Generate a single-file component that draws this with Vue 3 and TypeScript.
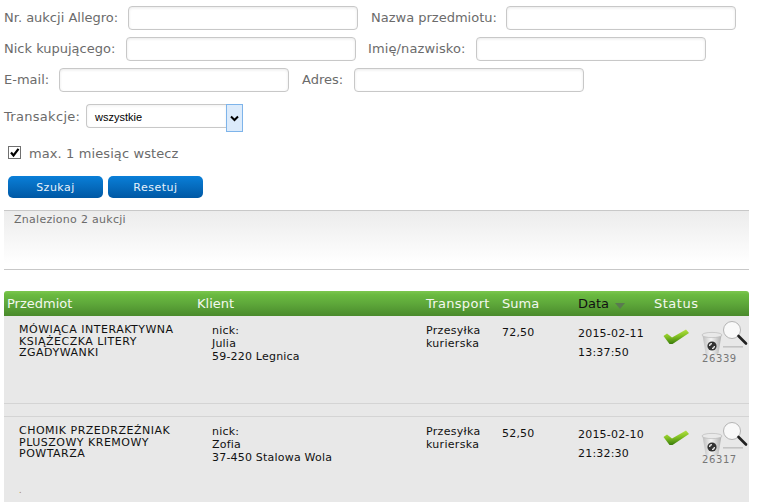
<script setup lang="ts">
interface Row {
  title: string[];
  name: string;
  city: string;
  suma: string;
  date: string;
  time: string;
  id: string;
}
const rows: Row[] = [
  { title: ['MÓWIĄCA INTERAKTYWNA', 'KSIĄŻECZKA LITERY', 'ZGADYWANKI'], name: 'Julia', city: '59-220 Legnica', suma: '72,50', date: '2015-02-11', time: '13:37:50', id: '26339' },
  { title: ['CHOMIK PRZEDRZEŹNIAK', 'PLUSZOWY KREMOWY', 'POWTARZA'], name: 'Zofia', city: '37-450 Stalowa Wola', suma: '52,50', date: '2015-02-10', time: '21:32:30', id: '26317' },
];
</script>

<template>
  <div class="page">
    <form class="form" @submit.prevent>
      <div class="line">
        <label class="lbl w-nr">Nr. aukcji Allegro:</label><input class="inp" />
        <label class="lbl second w-name">Nazwa przedmiotu:</label><input class="inp" />
      </div>
      <div class="line">
        <label class="lbl w-nick">Nick kupującego:</label><input class="inp" />
        <label class="lbl second tight w-full">Imię/nazwisko:</label><input class="inp" />
      </div>
      <div class="line">
        <label class="lbl w-mail">E-mail:</label><input class="inp" />
        <label class="lbl second w-addr">Adres:</label><input class="inp" />
      </div>
      <div class="line sel-line">
        <label class="lbl w-trans">Transakcje:</label>
        <div class="select">
          <span class="sel-text">wszystkie</span>
          <span class="sel-btn">
            <svg width="9" height="7" viewBox="0 0 9 7"><path d="M1 1.5 L4.5 5 L8 1.5" fill="none" stroke="#000" stroke-width="2" /></svg>
          </span>
        </div>
      </div>
      <div class="check-line">
        <span class="box">
          <svg width="13" height="13" viewBox="0 0 13 13"><path d="M3 6.5 L5.5 9.5 L10.5 2.8" fill="none" stroke="#000" stroke-width="2.2" /></svg>
        </span>
        <span class="lbl chk-lbl">max. 1 miesiąc wstecz</span>
      </div>
      <div class="buttons">
        <button class="btn" type="button">Szukaj</button>
        <button class="btn" type="button">Resetuj</button>
      </div>
    </form>

    <div class="found">Znaleziono 2 aukcji</div>

    <div class="table">
      <div class="head grid">
        <span>Przedmiot</span>
        <span>Klient</span>
        <span class="wide">Transport</span>
        <span>Suma</span>
        <span class="active">Data<i class="tri"></i></span>
        <span class="wider">Status</span>
      </div>
      <template v-for="(r, i) in rows" :key="r.id">
        <div class="row grid" :class="{ last: i === 1 }">
          <div class="title"><div v-for="t in r.title" :key="t">{{ t }}</div><div v-if="i === 1" class="dot">.</div></div>
          <div class="client"><div>nick:</div><div>{{ r.name }}</div><div>{{ r.city }}</div></div>
          <div class="transport">Przesyłka<br />kurierska</div>
          <div class="suma">{{ r.suma }}</div>
          <div class="date"><div>{{ r.date }}</div><div>{{ r.time }}</div></div>
          <div class="status">
            <svg class="check" width="27" height="18" viewBox="0 0 27 18">
              <defs>
                <linearGradient :id="'g' + i" x1="0" y1="0" x2="0.15" y2="1">
                  <stop offset="0" stop-color="#c6ea50" />
                  <stop offset=".5" stop-color="#86c424" />
                  <stop offset="1" stop-color="#3d7f0c" />
                </linearGradient>
              </defs>
              <path d="M0.5 8 L4 5.5 L9 9.5 L23 1.5 L26 5 L9.5 16 L6.5 16 Z" :fill="'url(#g' + i + ')'" />
            </svg>
            <div class="tools">
              <svg class="tool-svg" width="50" height="36" viewBox="0 0 50 36">
                <defs>
                  <linearGradient :id="'b' + i" x1="0" y1="0" x2="1" y2="0">
                    <stop offset="0" stop-color="#bdbdbd" />
                    <stop offset=".45" stop-color="#f4f4f4" />
                    <stop offset="1" stop-color="#b0b0b0" />
                  </linearGradient>
                </defs>
                <path d="M2.5 15 L5.5 33 C6 35.5 18 35.5 18.5 33 L21.5 15 Z" :fill="'url(#b' + i + ')'" />
                <ellipse cx="12" cy="15" rx="10" ry="2.6" fill="#e9e9e9" stroke="#bcbcbc" stroke-width=".7" />
                <circle cx="12" cy="26" r="4.6" fill="#333" />
                <path d="M9.6 26 A2.4 2.4 0 0 1 12 23.6 M14.4 26 A2.4 2.4 0 0 1 12 28.4" fill="none" stroke="#eee" stroke-width="1.3" />
                <rect x="23" y="26" width="20" height="1.6" fill="#c4c4c4" />
                <circle cx="32" cy="10" r="8.5" fill="#f9f9f9" stroke="#b4b4b4" stroke-width="1" />
                <path d="M38.5 16 L46 23.5" stroke="#222" stroke-width="2.6" stroke-linecap="round" />
              </svg>
              <div class="id">{{ r.id }}</div>
            </div>
          </div>
        </div>
        <div v-if="i === 0" class="sep"></div>
      </template>
    </div>
  </div>
</template>

<style>
html, body { margin: 0; padding: 0; background: #fff; overflow: hidden; }
</style>

<style scoped>
.page {
  width: 763px;
  height: 502px;
  overflow: hidden;
  font-family: "DejaVu Sans", Verdana, sans-serif;
  font-size: 11px;
}
.form { padding: 6px 0 0 4px; }
.line { display: flex; align-items: flex-start; height: 24px; margin-bottom: 7px; }
.lbl { font-size: 13px; line-height: 24px; color: #6b6b6b; white-space: nowrap; }
.second { margin-left: 13px; }
.tight { margin-left: 12px; }
.lbl + .inp { margin-left: 10px; }
.w-nr { width: 114px; }
.w-nick { width: 112px; }
.w-mail { width: 45px; }
.w-name { width: 125px; }
.w-full { width: 98px; letter-spacing: .12px; }
.w-addr { width: 42px; }
.w-trans { width: 76px; letter-spacing: .3px; padding-top: 1px; }
.inp {
  width: 230px;
  height: 24px;
  box-sizing: border-box;
  border: 1px solid #c8c8c8;
  border-radius: 4px;
  background: #fff;
  box-shadow: inset 0 1px 3px rgba(0, 0, 0, .09);
  outline: none;
  padding: 0;
}
.sel-line { margin-top: 12px; margin-bottom: 0; }
.select {
  margin-left: 6px;
  width: 157px;
  height: 28px;
  display: flex;
}
.sel-text {
  width: 140px;
  height: 24px;
  box-sizing: border-box;
  border: 1px solid #c8c8c8;
  border-right: 0;
  border-radius: 4px 0 0 4px;
  font-family: "Liberation Sans", Arial, sans-serif;
  font-size: 11px;
  line-height: 24px;
  padding-left: 8px;
  color: #000;
  box-shadow: inset 0 1px 3px rgba(0, 0, 0, .06);
}
.sel-btn {
  width: 17px;
  height: 28px;
  box-sizing: border-box;
  border: 1px solid #7eb4ea;
  background: #dcebfb;
  display: flex;
  align-items: center;
  justify-content: center;
}
.check-line { display: flex; align-items: center; margin: 14px 0 0 4px; height: 20px; }
.box {
  width: 13px;
  height: 13px;
  box-sizing: border-box;
  border: 1px solid #707070;
  background: #fff;
  margin-right: 8px;
  display: flex;
  align-items: center;
  justify-content: center;
}
.box svg { flex: none; }
.chk-lbl { letter-spacing: .1px; padding-top: 4px; }
.buttons { display: flex; gap: 5px; margin: 14px 0 0 4px; }
.btn {
  width: 95px;
  height: 22px;
  border: 0;
  padding: 0;
  border-radius: 5px;
  background: linear-gradient(#0a7fd8, #0058a4);
  color: #e6f2fb;
  font-family: "DejaVu Sans", Verdana, sans-serif;
  font-size: 11px;
  letter-spacing: .5px;
}
.found {
  margin: 12px 0 0 4px;
  width: 745px;
  height: 60px;
  box-sizing: border-box;
  border-top: 1px solid #c8c8c8;
  border-bottom: 1px solid #c8c8c8;
  background: linear-gradient(#ececec, #fff 90%);
  padding: 2px 0 0 10px;
  color: #6b6b6b;
  font-size: 11px;
  letter-spacing: .28px;
}
.table { margin: 21px 0 0 4px; width: 745px; }
.grid { display: grid; }
.head {
  grid-template-columns: 190px 229px 76px 76px 76px 1fr;
  padding-left: 3px;
  height: 25px;
  align-items: center;
  background: linear-gradient(#7cc74e 0, #6aba40 15%, #5ea83a 50%, #4a8a2c 100%);
  border-radius: 3px 3px 0 0;
  color: #f3f8ee;
  font-size: 13px;
}
.wide { letter-spacing: .3px; }
.wider { letter-spacing: .5px; }
.active { color: #111; }
.tri {
  display: inline-block;
  width: 0;
  height: 0;
  margin-left: 6px;
  border-left: 5px solid transparent;
  border-right: 5px solid transparent;
  border-top: 6px solid #5a7a50;
  vertical-align: -1px;
}
.row {
  grid-template-columns: 193px 214px 76px 76px 76px 1fr;
  padding-left: 15px;
  background: #e8e8e8;
  color: #111;
  height: 88px;
  border-bottom: 1px solid #d4d4d4;
  box-sizing: border-box;
  font-size: 11px;
}
.row.last { height: 90px; border-bottom: 0; }
.sep { height: 12px; background: #e8e8e8; border-bottom: 1px solid #d4d4d4; }
.title { padding-top: 8px; letter-spacing: .5px; white-space: nowrap; }
.title > div { line-height: 11.7px; }
.title > .dot { margin-top: 25px; color: #a08040; font-size: 8px; }
.client { padding-top: 8px; line-height: 13px; letter-spacing: .2px; }
.transport { padding-top: 8px; line-height: 13px; letter-spacing: .3px; }
.suma { padding-top: 10px; letter-spacing: .2px; }
.date { padding-top: 8px; line-height: 19px; letter-spacing: .2px; }
.status { position: relative; }
.check { position: absolute; left: 9px; top: 12px; }
.tools { position: absolute; left: 46px; top: 4px; width: 50px; }
.tool-svg { display: block; }
.id { margin-top: -4px; padding-left: 2px; font-size: 10px; line-height: 13px; color: #777; letter-spacing: .6px; }
</style>
